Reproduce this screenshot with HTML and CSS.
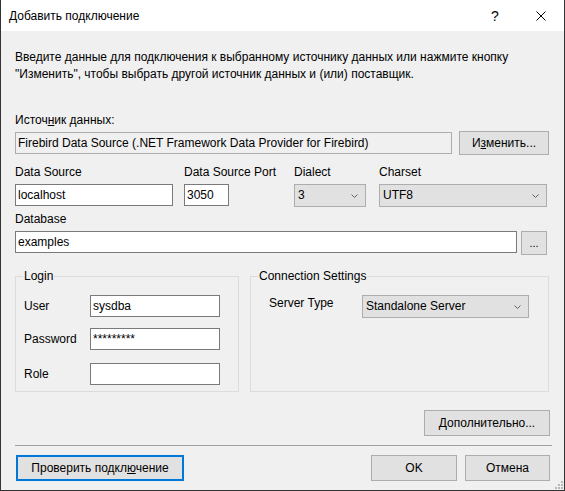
FILE: index.html
```html
<!DOCTYPE html>
<html lang="ru">
<head>
    <meta charset="UTF-8">
    <title>Добавить подключение</title>
    <link rel="stylesheet" href="styles.css">
</head>
<body>

<div id="dialog">
    <div id="titlebar">
        <span class="title">Добавить подключение</span>
        <span class="caption-btn help">?</span>
        <span class="caption-btn close">
            <svg width="10" height="10" viewBox="0 0 10 10"><path d="M0.5 0.5L9.5 9.5M9.5 0.5L0.5 9.5" stroke="#000" stroke-width="1" fill="none"/></svg>
        </span>
    </div>

    <div id="content">
        <p class="intro">Введите данные для подключения к выбранному источнику данных или нажмите кнопку<br>"Изменить", чтобы выбрать другой источник данных и (или) поставщик.</p>

        <div class="label source-label">Источ<u>н</u>ик данных:</div>
        <div class="row source-row">
            <input type="text" class="readonly" value="Firebird Data Source (.NET Framework Data Provider for Firebird)" readonly>
            <button class="btn btn-change">И<u>з</u>менить...</button>
        </div>

        <div class="fields">
            <div class="field">
                <div class="label">Data Source</div>
                <input type="text" class="w-source" value="localhost">
            </div>
            <div class="field">
                <div class="label">Data Source Port</div>
                <input type="text" class="w-port" value="3050">
            </div>
            <div class="field">
                <div class="label">Dialect</div>
                <div class="combo w-dialect">3<svg class="chevron" width="7" height="4" viewBox="0 0 7 4"><path d="M0.5 0.5L3.5 3.5L6.5 0.5" stroke="#606060" fill="none"/></svg></div>
            </div>
            <div class="field">
                <div class="label">Charset</div>
                <div class="combo w-charset">UTF8<svg class="chevron" width="7" height="4" viewBox="0 0 7 4"><path d="M0.5 0.5L3.5 3.5L6.5 0.5" stroke="#606060" fill="none"/></svg></div>
            </div>
        </div>

        <div class="label db-label">Database</div>
        <div class="row db-row">
            <input type="text" class="w-db" value="examples">
            <button class="btn btn-browse">...</button>
        </div>

        <div class="groups">
            <fieldset class="group login">
                <legend>Login</legend>
                <div class="login-row">
                    <span class="login-label">User</span>
                    <input type="text" class="w-login" value="sysdba">
                </div>
                <div class="login-row">
                    <span class="login-label">Password</span>
                    <input type="text" class="w-login pass" value="*********">
                </div>
                <div class="login-row">
                    <span class="login-label">Role</span>
                    <input type="text" class="w-login" value="">
                </div>
            </fieldset>
            <fieldset class="group settings">
                <legend>Connection Settings</legend>
                <div class="settings-row">
                    <span class="settings-label">Server Type</span>
                    <div class="combo w-server">Standalone Server<svg class="chevron" width="7" height="4" viewBox="0 0 7 4"><path d="M0.5 0.5L3.5 3.5L6.5 0.5" stroke="#606060" fill="none"/></svg></div>
                </div>
            </fieldset>
        </div>

        <div class="advanced-row">
            <button class="btn btn-advanced"><u>Д</u>ополнительно...</button>
        </div>

        <div class="separator"></div>

        <div class="bottom-row">
            <button class="btn btn-test">Проверить подкл<u>ю</u>чение</button>
            <button class="btn btn-ok">OK</button>
            <button class="btn btn-cancel">Отмена</button>
        </div>
    </div>

    <svg class="grip" width="10" height="10" viewBox="0 0 10 10">
        <rect x="8" y="2" width="2" height="2" fill="#b8b8b8"/>
        <rect x="5" y="5" width="2" height="2" fill="#b8b8b8"/>
        <rect x="8" y="5" width="2" height="2" fill="#b8b8b8"/>
        <rect x="2" y="8" width="2" height="2" fill="#b8b8b8"/>
        <rect x="5" y="8" width="2" height="2" fill="#b8b8b8"/>
        <rect x="8" y="8" width="2" height="2" fill="#b8b8b8"/>
    </svg>
</div>

</body>
</html>
```

FILE: styles.css
```css
body {
    margin: 0;
    padding: 0;
    font-family: "Liberation Sans", Arial, sans-serif;
    font-size: 12px;
    color: #000;
    background-color: #fff;
}

#dialog {
    position: relative;
    width: 565px;
    height: 491px;
    box-sizing: border-box;
    border: 1px solid #333;
    border-top: none;
    background-color: #f0f0f0;
}

#titlebar {
    height: 31px;
    background-color: #fff;
    display: flex;
    align-items: center;
    padding-left: 8px;
}

#titlebar .title {
    flex: 1;
    font-size: 12px;
}

.caption-btn {
    width: 46px;
    height: 31px;
    display: flex;
    align-items: center;
    justify-content: center;
}

.help {
    font-size: 14px;
}

#content {
    padding: 18px 14px 0 14px;
}

.intro {
    margin: 0;
    line-height: 17px;
}

.label {
    line-height: 16px;
}

.source-label {
    margin-top: 29px;
}

.row {
    display: flex;
}

.source-row {
    margin-top: 3px;
    align-items: center;
}

input {
    box-sizing: border-box;
    height: 22px;
    margin: 0;
    padding: 0 2px;
    border: 1px solid #7a7a7a;
    background-color: #fff;
    font-family: inherit;
    font-size: 12px;
    color: #000;
    outline: none;
}

input.readonly {
    width: 437px;
    margin-right: 7px;
    border-color: #adadad;
    background-color: #f0f0f0;
}

.btn {
    box-sizing: border-box;
    height: 26px;
    margin: 0;
    padding: 0;
    border: 1px solid #adadad;
    border-radius: 0;
    background-color: #e1e1e1;
    font-family: inherit;
    font-size: 12px;
    color: #000;
}

.btn-change {
    width: 90px;
    height: 24px;
}

.fields {
    margin-top: 9px;
    display: grid;
    grid-template-columns: 169px 110px 85px 168px;
}

.field .label {
    margin-bottom: 4px;
}

.w-source {
    width: 158px;
}

.w-port {
    width: 45px;
}

.combo {
    position: relative;
    box-sizing: border-box;
    height: 23px;
    line-height: 21px;
    padding-left: 3px;
    border: 1px solid #adadad;
    background-color: #e1e1e1;
}

.combo .chevron {
    position: absolute;
    right: 7px;
    top: 9px;
}

.w-dialect {
    width: 72px;
}

.w-charset {
    width: 168px;
}

.db-label {
    margin-top: 4px;
    margin-bottom: 4px;
}

.db-row {
    align-items: flex-start;
}

.w-db {
    width: 502px;
    margin-right: 4px;
}

.btn-browse {
    width: 26px;
    height: 24px;
    font-size: 11px;
}

.groups {
    margin-top: 13px;
    display: flex;
    gap: 11px;
}

.group {
    margin: 0;
    padding: 11px 8px 6px 8px;
    border: 1px solid #dcdcdc;
    min-width: 0;
}

.group legend {
    margin-left: -1px;
    padding: 0 1px;
    line-height: 16px;
}

.login {
    width: 224px;
    box-sizing: border-box;
}

.settings {
    width: 299px;
    box-sizing: border-box;
}

.login-row {
    display: flex;
    align-items: center;
}

.login-row + .login-row {
    margin-top: 11px;
}

.login-row:last-child {
    margin-top: 13px;
}

.login-label {
    width: 66px;
}

.w-login {
    width: 130px;
}

.settings-row {
    display: flex;
    align-items: flex-start;
    padding-left: 10px;
}

.settings-label {
    width: 93px;
    line-height: 16px;
}

.w-server {
    width: 167px;
}

.advanced-row {
    margin-top: 18px;
    display: flex;
    justify-content: flex-end;
}

.btn-advanced {
    width: 126px;
}

.separator {
    margin-top: 9px;
    margin-right: -2px;
    height: 1px;
    background-color: #a0a0a0;
}

.bottom-row {
    margin-top: 9px;
    display: flex;
}

.btn-test {
    width: 168px;
    margin-left: 1px;
    border: 2px solid #0078d7;
}

.btn-ok {
    width: 86px;
    margin-left: auto;
    margin-right: 8px;
}

.btn-cancel {
    width: 85px;
}

.grip {
    position: absolute;
    right: 1px;
    bottom: 1px;
}
```
